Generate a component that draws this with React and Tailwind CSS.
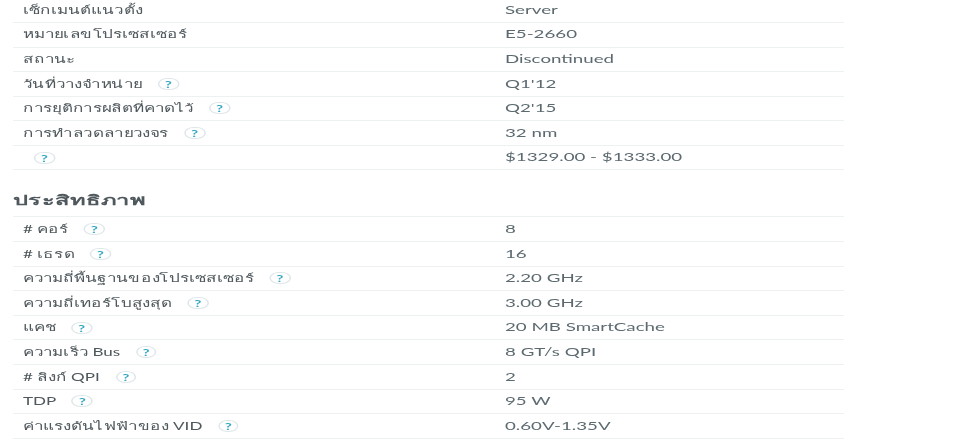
const general = [
  { label: "เซ็กเมนต์แนวตั้ง", value: "Server", help: false },
  { label: "หมายเลขโปรเซสเซอร์", value: "E5-2660", help: false },
  { label: "สถานะ", value: "Discontinued", help: false },
  { label: "วันที่วางจำหน่าย", value: "Q1'12", help: true },
  { label: "การยุติการผลิตที่คาดไว้", value: "Q2'15", help: true },
  { label: "การทำลวดลายวงจร", value: "32 nm", help: true },
  { label: "", value: "$1329.00 - $1333.00", help: true },
];

const performance = [
  { label: "# คอร์", value: "8", help: true },
  { label: "# เธรด", value: "16", help: true },
  { label: "ความถี่พื้นฐานของโปรเซสเซอร์", value: "2.20 GHz", help: true },
  { label: "ความถี่เทอร์โบสูงสุด", value: "3.00 GHz", help: true },
  { label: "แคช", value: "20 MB SmartCache", help: true },
  { label: "ความเร็ว Bus", value: "8 GT/s QPI", help: true },
  { label: "# ลิงก์ QPI", value: "2", help: true },
  { label: "TDP", value: "95 W", help: true },
  { label: "ค่าแรงดันไฟฟ้าของ VID", value: "0.60V-1.35V", help: true },
];

// the source picture is stretched sideways, so the text cells are scaled on x
const HelpBadge = ({ alone }) => (
  <span
    className={`${alone ? "ml-[7px]" : "ml-[10px]"} inline-flex h-[12px] w-[13.5px] items-center justify-center rounded-full border border-[#dfe7ea] text-[10px] leading-none font-bold text-[#35a7c4]`}
  >
    ?
  </span>
);

const Row = ({ label, value, help }) => (
  <div className="grid h-[24.6px] grid-cols-[492px_1fr] items-center border-b border-[#eef1f2]">
    <div className="pl-[10px]">
      <div className="flex origin-left scale-x-[1.55] items-center text-[11px] whitespace-nowrap text-[#4f585c]">
        {label && <span>{label}</span>}
        {help && <HelpBadge alone={!label} />}
      </div>
    </div>
    <div className="origin-left scale-x-[1.7] text-[11px] whitespace-nowrap text-[#5c6a70]">{value}</div>
  </div>
);

export default function App() {
  return (
    <div className="h-[448px] w-[960px] overflow-hidden bg-white pr-[116px] pl-[13px] font-['Lato','Noto_Sans',sans-serif] blur-[0.3px]">
      <div className="-mt-[1.7px]">
        {general.map((row, i) => (
          <Row key={i} {...row} />
        ))}
      </div>
      <h2 className="flex h-[46px] items-end pb-[9px] text-[14px] leading-none font-bold text-[#4f585c]">
        <span className="origin-left scale-x-[1.69]">ประสิทธิภาพ</span>
      </h2>
      <div className="border-t border-[#eef1f2]">
        {performance.map((row, i) => (
          <Row key={i} {...row} />
        ))}
      </div>
    </div>
  );
}
